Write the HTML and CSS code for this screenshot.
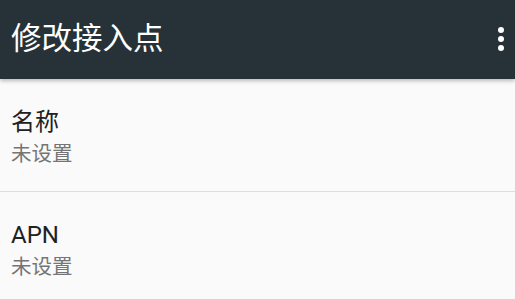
FILE: index.html
```html
<!DOCTYPE html>
<html lang="zh-CN">
<head>
<meta charset="utf-8">
<link rel="stylesheet" href="styles.css">
</head>
<body>
<header class="toolbar">
  <h1 class="title">修改接入点</h1>
  <div class="menu" aria-label="更多选项">
    <span class="dot"></span><span class="dot"></span><span class="dot"></span>
  </div>
</header>
<main class="list">
  <div class="item">
    <div class="item-title">名称</div>
    <div class="item-summary">未设置</div>
  </div>
  <div class="item">
    <div class="item-title">APN</div>
    <div class="item-summary">未设置</div>
  </div>
</main>
</body>
</html>
```
FILE: styles.css
```css
html, body {
  margin: 0;
  padding: 0;
  background: #fafafa;
  font-family: Roboto, "Noto Sans CJK SC", sans-serif;
  overflow: hidden;
}
.toolbar {
  height: 79px;
  background: #263238;
  display: flex;
  align-items: center;
  justify-content: space-between;
  padding: 0 11px 0 11px;
  box-shadow: 0 2px 4px rgba(0,0,0,0.25);
  position: relative;
  z-index: 1;
}
.title {
  margin: 0;
  color: #ffffff;
  font-size: 30.5px;
  font-weight: 400;
  line-height: 40px;
  padding-bottom: 1px;
}
.menu {
  display: flex;
  flex-direction: column;
  gap: 3px;
  align-items: center;
  margin-top: -1px;
}
.dot {
  width: 6px;
  height: 6px;
  border-radius: 50%;
  background: #ffffff;
}
.list {
  display: flex;
  flex-direction: column;
}
.item {
  padding: 27px 12px 21px 11px;
  border-bottom: 1px solid #dedede;
}
.item-title {
  color: #212121;
  font-size: 24px;
  line-height: 32px;
}
.item-summary {
  color: #757575;
  font-size: 20.5px;
  line-height: 32px;
}
```
